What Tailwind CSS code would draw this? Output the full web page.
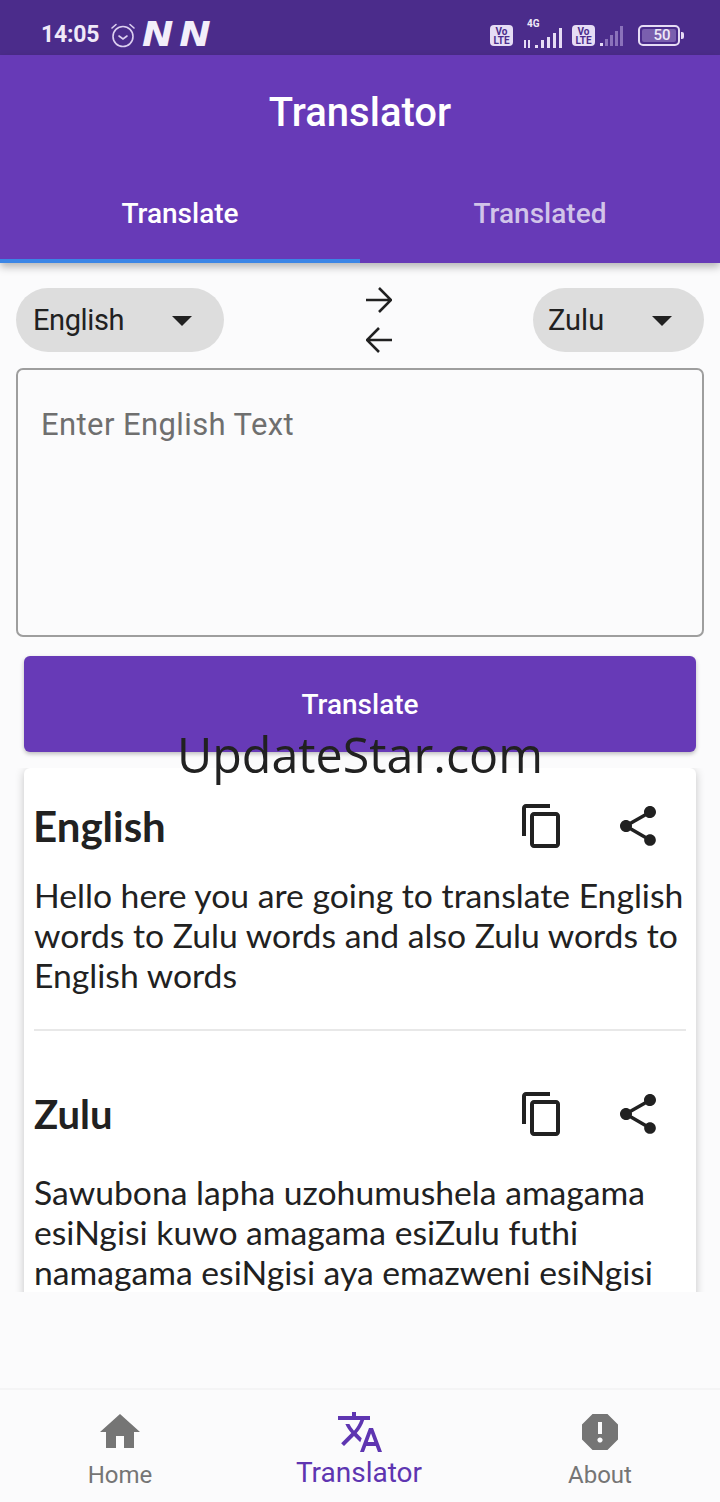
<!DOCTYPE html>
<html>
<head>
<meta charset="utf-8">
<script src="https://cdn.jsdelivr.net/npm/@tailwindcss/browser@4"></script>
</head>
<body class="bg-[#fbfbfc]">
<div class="relative w-[720px] h-[1502px] overflow-hidden flex flex-col font-['Roboto',sans-serif] bg-[#fbfbfc]">

    <!-- status bar -->
    <div class="h-[55px] shrink-0 bg-[#4b2c8b] flex items-center pt-[16px] pl-[41px] pr-[36px] text-[#efe9f8]">
        <span class="text-[23px] font-bold tracking-[-0.2px]">14:05</span>
        <svg class="ml-[11px] mt-[-2px]" width="26" height="26" viewBox="0 0 26 26" fill="none" stroke="#dccff0" stroke-width="1.6">
            <circle cx="13" cy="14.5" r="10"/>
            <path d="M9 14l4 3 4-3M2 6l4-3.500M24 6l-4-3.500" stroke-linecap="round"/>
        </svg>
        <span class="ml-[6px] mt-[-3px] flex gap-[5px] origin-left scale-x-[1.14] font-['DejaVu_Sans',sans-serif] text-[33px] leading-none font-bold italic text-[#f3eefa]"><span>N</span><span>N</span></span>
        <div class="ml-auto flex items-center">
            <div class="w-[23px] h-[21px] rounded-[4px] bg-[#e6dcf5] text-[#4b2c8b] text-[10px] leading-[9px] font-bold text-center pt-[2px]">Vo<br>LTE</div>
            <div class="ml-[11px] relative w-[38px] h-[24px] flex items-end gap-[3px] justify-end">
                <span class="absolute left-[3px] top-[-5px] text-[10px] leading-[10px] font-bold">4G</span>
                <span class="absolute left-0 bottom-0 w-[2px] h-[8px] bg-[#e6dcf5]"></span>
                <span class="absolute left-[4px] bottom-0 w-[2px] h-[8px] bg-[#e6dcf5]"></span>
                <span class="w-[3px] h-[3px] bg-[#e6dcf5]"></span>
                <span class="w-[3px] h-[8px] bg-[#e6dcf5]"></span>
                <span class="w-[3px] h-[11px] bg-[#e6dcf5]"></span>
                <span class="w-[3px] h-[15px] bg-[#e6dcf5]"></span>
                <span class="w-[3px] h-[20px] bg-[#e6dcf5]"></span>
            </div>
            <div class="ml-[10px] w-[23px] h-[21px] rounded-[4px] bg-[#e6dcf5] text-[#4b2c8b] text-[10px] leading-[9px] font-bold text-center pt-[2px]">Vo<br>LTE</div>
            <div class="ml-[5px] w-[27px] h-[20px] flex items-end gap-[2px]">
                <span class="w-[3px] h-[3px] bg-[#e6dcf5]"></span>
                <span class="w-[3px] h-[7px] bg-[#8b72bb]"></span>
                <span class="w-[3px] h-[11px] bg-[#8b72bb]"></span>
                <span class="w-[3px] h-[15px] bg-[#8b72bb]"></span>
                <span class="w-[3px] h-[20px] bg-[#8b72bb]"></span>
            </div>
            <div class="ml-[11px] w-[42px] h-[21px] rounded-[5px] border-2 border-[#e6dcf5] p-[2px]">
                <div class="h-full rounded-[2px] bg-[#7a5fae] text-[15px] leading-[13px] font-medium text-center pl-[6px]">50</div>
            </div>
            <span class="ml-[1px] w-[3px] h-[7px] bg-[#e6dcf5] rounded-r-[2px]"></span>
        </div>
    </div>

    <!-- app bar + tabs -->
    <div class="h-[208px] shrink-0 bg-[#673ab7] flex flex-col text-white shadow-[0_4px_8px_rgba(0,0,0,0.28)] z-10">
        <div class="h-[114px] pt-[2px] flex items-center justify-center text-[40px] font-medium">Translator</div>
        <div class="h-[90px] flex text-[28px] font-medium">
            <div class="flex-1 flex items-center justify-center">Translate</div>
            <div class="flex-1 flex items-center justify-center text-[#d1c4e9]">Translated</div>
        </div>
        <div class="h-[4px] w-[360px] bg-[#3b86e6]"></div>
    </div>

    <!-- language pickers -->
    <div class="h-[64px] mt-[25px] shrink-0 px-[16px] flex items-center justify-between">
        <div class="w-[208px] h-[64px] rounded-[32px] bg-[#dddddd] flex items-center pl-[17px] pr-[24px] justify-between text-[29px] tracking-[-0.4px] text-[#212121]">
            <span class="mt-[2px]">English</span>
            <svg width="48" height="48" viewBox="0 0 24 24" class="-mr-[6px]" fill="#212121"><path d="M7 10l5 5 5-5z"/></svg>
        </div>
        <div class="flex flex-col gap-[14px] ml-[1px]">
            <svg width="26" height="26" viewBox="0 0 26 26" fill="none" stroke="#212121" stroke-width="2.600"><path d="M0 13h24M13 1l12 12-12 12"/></svg>
            <svg width="26" height="26" viewBox="0 0 26 26" fill="none" stroke="#212121" stroke-width="2.600"><path d="M26 13H2M13 1L1 13l12 12"/></svg>
        </div>
        <div class="w-[171px] h-[64px] rounded-[32px] bg-[#dddddd] flex items-center pl-[15px] pr-[24px] justify-between text-[29px] text-[#212121]">
            <span class="mt-[2px]">Zulu</span>
            <svg width="48" height="48" viewBox="0 0 24 24" class="-mr-[6px]" fill="#212121"><path d="M7 10l5 5 5-5z"/></svg>
        </div>
    </div>

    <!-- input -->
    <div class="mx-[16px] mt-[16px] h-[269px] shrink-0 rounded-[7px] border-2 border-[#9e9e9e] px-[23px] pt-[36px] text-[31px] leading-[38px] tracking-[0.4px] text-[#6f6f6f]">Enter English Text</div>

    <!-- translate button -->
    <div class="mx-[24px] mt-[19px] h-[96px] pt-[2px] shrink-0 rounded-[6px] bg-[#673ab7] text-white text-[28px] font-medium flex items-center justify-center shadow-[0_2px_4px_rgba(0,0,0,0.25)]">Translate</div>

    <!-- results -->
    <div class="mt-[16px] h-[524px] shrink-0 overflow-hidden px-[24px] font-['Lato',sans-serif] text-[#212121]">
        <div class="h-[700px] rounded-t-[6px] bg-white shadow-[0_2px_10px_rgba(0,0,0,0.22)] px-[10px]">
            <div class="h-[100px] pt-[16px] flex items-center">
                <span class="text-[42px] font-bold leading-none -ml-[1px]">English</span>
                <svg class="ml-auto" width="48" height="48" viewBox="0 0 24 24" fill="#212121"><path d="M16 1H4c-1.100 0-2 .9-2 2v14h2V3h12V1zm3 4H8c-1.100 0-2 .9-2 2v14c0 1.100.9 2 2 2h11c1.100 0 2-.9 2-2V7c0-1.100-.9-2-2-2zm0 16H8V7h11v14z"/></svg>
                <svg class="ml-[48px] mr-[24px]" width="48" height="48" viewBox="0 0 24 24" fill="#212121"><path d="M18 16.080c-.76 0-1.440.3-1.960.77L8.910 12.700c.05-.23.09-.46.09-.7s-.04-.47-.09-.7l7.050-4.110c.54.5 1.250.81 2.040.81 1.660 0 3-1.340 3-3s-1.340-3-3-3-3 1.340-3 3c0 .24.04.47.09.7L8.040 9.810C7.500 9.310 6.790 9 6 9c-1.660 0-3 1.340-3 3s1.340 3 3 3c.79 0 1.500-.31 2.040-.81l7.120 4.160c-.05.21-.08.43-.08.65 0 1.610 1.310 2.920 2.920 2.920 1.610 0 2.920-1.310 2.920-2.920s-1.310-2.920-2.920-2.920z"/></svg>
            </div>
            <p class="mt-[7px] text-[33.7px] leading-[40px]">Hello here you are going to translate English words to Zulu words and also Zulu words to English words</p>
            <div class="mt-[34px] h-[2px] bg-[#e8e8e8]"></div>
            <div class="h-[100px] mt-[34px] flex items-center">
                <span class="text-[40px] font-bold leading-none mt-[-2px]">Zulu</span>
                <svg class="ml-auto mt-[-3px]" width="48" height="48" viewBox="0 0 24 24" fill="#212121"><path d="M16 1H4c-1.100 0-2 .9-2 2v14h2V3h12V1zm3 4H8c-1.100 0-2 .9-2 2v14c0 1.100.9 2 2 2h11c1.100 0 2-.9 2-2V7c0-1.100-.9-2-2-2zm0 16H8V7h11v14z"/></svg>
                <svg class="ml-[48px] mr-[24px] mt-[-3px]" width="48" height="48" viewBox="0 0 24 24" fill="#212121"><path d="M18 16.080c-.76 0-1.440.3-1.960.77L8.910 12.700c.05-.23.09-.46.09-.7s-.04-.47-.09-.7l7.050-4.110c.54.5 1.250.81 2.040.81 1.660 0 3-1.340 3-3s-1.340-3-3-3-3 1.340-3 3c0 .24.04.47.09.7L8.040 9.810C7.500 9.310 6.790 9 6 9c-1.660 0-3 1.340-3 3s1.340 3 3 3c.79 0 1.500-.31 2.040-.81l7.120 4.160c-.05.21-.08.43-.08.65 0 1.610 1.310 2.920 2.920 2.920 1.610 0 2.920-1.310 2.920-2.920s-1.310-2.920-2.920-2.920z"/></svg>
            </div>
            <p class="mt-[7px] text-[33.7px] leading-[40px]">Sawubona lapha uzohumushela amagama esiNgisi kuwo amagama esiZulu futhi namagama esiNgisi aya emazweni esiNgisi</p>
        </div>
    </div>

    <!-- bottom nav -->
    <div class="mt-auto h-[114px] shrink-0 border-t-2 border-[#f4f4f5] grid grid-cols-3 pt-[18px] text-[#757575]">
        <div class="flex flex-col items-center">
            <svg width="48" height="48" viewBox="0 0 24 24" fill="#757575"><path d="M10 20v-6h4v6h5v-8h3L12 3 2 12h3v8z"/></svg>
            <span class="text-[24px] leading-[28px] mt-[5px]">Home</span>
        </div>
        <div class="flex flex-col items-center text-[#5e35b1]">
            <svg width="48" height="48" viewBox="0 0 24 24" fill="#5e35b1"><path d="M12.870 15.070l-2.540-2.510.03-.03c1.740-1.940 2.980-4.170 3.710-6.530H17V4h-7V2H8v2H1v1.990h11.170C11.500 7.920 10.440 9.750 9 11.350 8.070 10.320 7.300 9.190 6.690 8h-2c.73 1.630 1.730 3.170 2.980 4.560l-5.090 5.020L4 19l5-5 3.110 3.110.76-2.040zM18.500 10h-2L12 22h2l1.120-3h4.750L21 22h2l-4.500-12zm-2.620 7l1.620-4.330L19.120 17h-3.240z"/></svg>
            <span class="text-[28px] leading-[32px] mt-[1px] -ml-[2px]">Translator</span>
        </div>
        <div class="flex flex-col items-center">
            <svg width="48" height="48" viewBox="0 0 24 24" fill="#757575"><path d="M15.730 3H8.270L3 8.270v7.460L8.270 21h7.460L21 15.730V8.270L15.730 3zM12 17.300c-.72 0-1.300-.58-1.300-1.300 0-.72.58-1.300 1.300-1.300.72 0 1.300.58 1.300 1.300 0 .72-.58 1.300-1.300 1.300zm1-4.300h-2V7h2v6z"/></svg>
            <span class="text-[24px] leading-[28px] mt-[5px]">About</span>
        </div>
    </div>

    <!-- watermark over the page -->
    <div class="absolute left-0 right-0 top-[722px] text-center font-['Open_Sans',sans-serif] text-[48.4px] leading-[64px] text-[#212121] z-20">UpdateStar.com</div>
</div>
</body>
</html>
